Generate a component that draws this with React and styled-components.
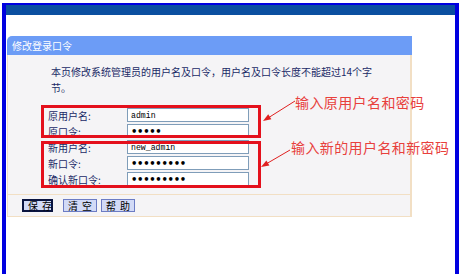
import React from 'react';
import styled, { createGlobalStyle } from 'styled-components';

const GlobalStyle = createGlobalStyle`
    html, body{
        overflow:hidden;
    }
    body{
        margin:0;
        background:#fff;
        font-family:"Noto Sans CJK SC","Liberation Sans",sans-serif;
    }
`;

const rows = [
    { label: '原用户名:', value: 'admin', type: 'text' },
    { label: '原口令:', value: '12345', type: 'password' },
    { label: '新用户名:', value: 'new_admin', type: 'text' },
    { label: '新口令:', value: '123456789', type: 'password' },
    { label: '确认新口令:', value: '123456789', type: 'password' },
];

const App = () => {
    return (
        <>
            <GlobalStyle />
            <Frame>
                <HeaderBar />
                <Panel>
                    <PanelTitle>修改登录口令</PanelTitle>
                    <PanelBody>
                        <Description>
                            <DescLine>本页修改系统管理员的用户名及口令，用户名及口令长度不能超过14个字</DescLine>
                            <DescLine>节。</DescLine>
                        </Description>
                        <Form>
                            {rows.map((r) => (
                                <FormRow key={r.label}>
                                    <Label>{r.label}</Label>
                                    <Input
                                        type={r.type}
                                        value={r.value}
                                        readOnly
                                        $secret={r.type === 'password'}
                                    />
                                </FormRow>
                            ))}
                        </Form>
                        <Footer>
                            <Button $primary>保存</Button>
                            <Button>清空</Button>
                            <Button>帮助</Button>
                        </Footer>
                    </PanelBody>
                </Panel>

                <RedBox $top={100} $height={33} />
                <RedBox $top={136} $height={47} />
                <Note $left={289} $top={89}>输入原用户名和密码</Note>
                <Note $left={285} $top={134}>输入新的用户名和新密码</Note>
                <Arrows viewBox="6 5 449 270" width="449" height="270">
                    <line x1="295" y1="101" x2="268" y2="118" stroke="#e02020" strokeWidth="1" />
                    <polygon points="263,121 271.4,119.3 268.2,114.3" fill="#e02020" />
                    <line x1="290" y1="150" x2="266" y2="164" stroke="#e02020" strokeWidth="1" />
                    <polygon points="261,167 269.4,165.5 266.4,160.4" fill="#e02020" />
                </Arrows>
            </Frame>
        </>
    );
};

const Frame = styled.div`
    position:relative;
    box-sizing:border-box;
    margin:3px 0 0 2px;
    width:457px;
    height:271px;
    border:4px solid #0000e0;
    border-top-width:2px;
    border-bottom:none;
    background:#fff;
`;

const HeaderBar = styled.div`
    height:10px;
    background:#0b4fa0;
`;

const Panel = styled.div`
    margin:21px 0 0 1px;
    width:405px;
`;

const PanelTitle = styled.div`
    height:19px;
    line-height:19px;
    padding-left:5px;
    background:#6c9cf6;
    border-top-left-radius:5px;
    color:#fff;
    font-size:10px;
`;

const PanelBody = styled.div`
    background:#f5f4f6;
    border:1px solid #f2dfc4;
    border-top:none;
    border-right-width:2px;
`;

const Description = styled.div`
    padding:9px 0 0 43px;
    font-size:10px;
    line-height:16px;
    color:#1a2a66;
`;

const DescLine = styled.div`
    white-space:nowrap;
`;

const Form = styled.div`
    margin-top:11px;
    padding-left:40px;
`;

const FormRow = styled.div`
    display:flex;
    align-items:center;
    height:16px;
`;

const Label = styled.div`
    width:79px;
    font-size:10px;
    color:#1a2a66;
`;

const Input = styled.input`
    box-sizing:border-box;
    width:122px;
    height:14px;
    padding:0 3px;
    border:1px solid #7f9db9;
    background:#fff;
    color:#000;
    outline:none;
    font-family:${(p) => (p.$secret ? '"DejaVu Sans",sans-serif' : '"Liberation Mono",monospace')};
    font-size:${(p) => (p.$secret ? '10px' : '8.2px')};
    letter-spacing:${(p) => (p.$secret ? '-0.3px' : '0')};
    font-weight:${(p) => (p.$secret ? '700' : '400')};
`;

const Footer = styled.div`
    display:flex;
    align-items:center;
    gap:4px;
    height:21px;
    margin-top:7px;
    padding-left:14px;
    border-top:1px solid #f2dfc4;
`;

const Button = styled.button`
    box-sizing:border-box;
    height:13px;
    width:${(p) => (p.$primary ? '31px' : '34px')};
    margin-right:${(p) => (p.$primary ? '6px' : '0')};
    padding:0 0 0 4px;
    border:${(p) => (p.$primary ? '2px solid #0a1440' : '1px solid #6c7cc4')};
    background:#d2daf6;
    color:#000;
    font-family:"Noto Sans CJK SC",sans-serif;
    font-size:10px;
    line-height:9px;
    letter-spacing:4px;
    white-space:nowrap;
    text-align:center;
`;

const RedBox = styled.div`
    position:absolute;
    left:35px;
    top:${(p) => p.$top}px;
    width:220px;
    height:${(p) => p.$height}px;
    box-sizing:border-box;
    border:3px solid #e4101c;
    pointer-events:none;
`;

const Note = styled.div`
    position:absolute;
    left:${(p) => p.$left}px;
    top:${(p) => p.$top}px;
    font-size:14px;
    line-height:16px;
    letter-spacing:0.4px;
    color:#e8403c;
    white-space:nowrap;
`;

const Arrows = styled.svg`
    position:absolute;
    left:0;
    top:0;
    pointer-events:none;
`;

export default App;
